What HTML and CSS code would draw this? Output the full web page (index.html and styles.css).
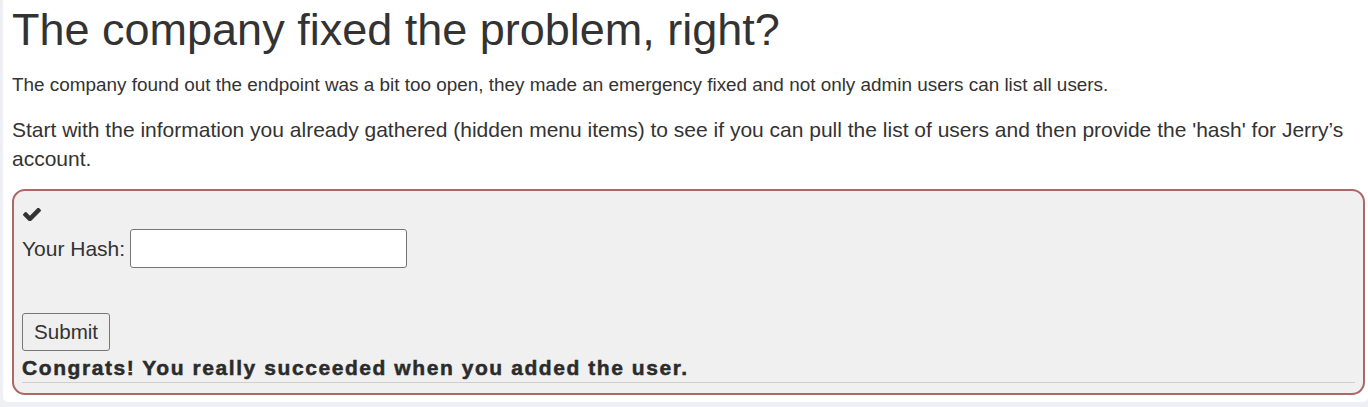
FILE: index.html
```html
<!DOCTYPE html>
<html>
<head>
<meta charset="utf-8">
<link rel="stylesheet" href="styles.css">
</head>
<body>
<div class="panel">
  <h1 class="title">The company fixed the problem, right?</h1>
  <p class="para">The company found out the endpoint was a bit too open, they made an emergency fixed and not only admin users can list all users.</p>
  <p class="para para-lg">Start with the information you already gathered (hidden menu items) to see if you can pull the list of users and then provide the 'hash' for Jerry’s account.</p>
  <div class="attack">
    <div class="check">
      <svg width="18" height="13" viewBox="121 362 1550 1100"><path d="M1671 566q0 40-28 68l-724 724-136 136q-28 28-68 28t-68-28l-136-136-362-362q-28-28-28-68t28-68l136-136q28-28 68-28t68 28l294 295 656-657q28-28 68-28t68 28l136 136q28 28 28 68z" fill="#333"/></svg>
    </div>
    <form class="form">
      <label class="label">Your Hash: <input class="field" type="text"></label>
      <div class="btnrow"><button class="submit" type="button">Submit</button></div>
    </form>
    <div class="feedback">Congrats! You really succeeded when you added the user.</div>
    <div class="rule"></div>
  </div>
</div>
</body>
</html>
```

FILE: styles.css
```css
html, body {
  margin: 0;
  padding: 0;
}
body {
  background: #eef0f6;
  font-family: "Liberation Sans", Arial, sans-serif;
  color: #333;
}
.panel {
  background: #fff;
  margin-left: 3px;
  padding: 0 3px 7px 9px;
  border-radius: 0 0 5px 5px;
}
.title {
  margin: 0;
  padding-top: 5px;
  font-size: 45px;
  font-weight: 400;
  line-height: 50px;
}
.para {
  font-size: 18.9px;
  line-height: 29px;
  margin: 15px 0 0;
}
.para + .para {
  margin-top: 16px;
}
.para-lg {
  font-size: 21px;
  line-height: 29px;
}
.attack {
  margin-top: 16px;
  background: #f0f0f0;
  border: 2px solid #ad6767;
  border-radius: 13px;
  padding: 16px 8px 10px 8px;
}
.check {
  height: 21px;
  padding-top: 1px;
}
.check svg {
  display: block;
  margin-left: 1px;
}
.form {
  margin: 0;
}
.label {
  font-size: 21px;
  display: flex;
  align-items: center;
  gap: 5px;
}
.field {
  width: 277px;
  height: 39px;
  box-sizing: border-box;
  margin: 0;
  border: 1px solid #767676;
  border-radius: 3px;
  background: #fff;
  font-size: 18px;
}
.btnrow {
  margin-top: 45px;
  display: flex;
}
.submit {
  font-family: "Liberation Sans", Arial, sans-serif;
  font-size: 20.6px;
  color: #333;
  height: 38px;
  margin: 0;
  padding: 0 11px;
  background: #efefef;
  border: 1px solid #767676;
  border-radius: 3px;
}
.feedback {
  font-size: 21px;
  font-weight: 700;
  color: #2b2b2b;
  line-height: 24px;
  margin-top: 5px;
  letter-spacing: 1.57px;
  -webkit-text-stroke: 0.5px #2b2b2b;
}
.rule {
  border-top: 1px solid #cfcfcf;
  margin-top: 2px;
}
```
